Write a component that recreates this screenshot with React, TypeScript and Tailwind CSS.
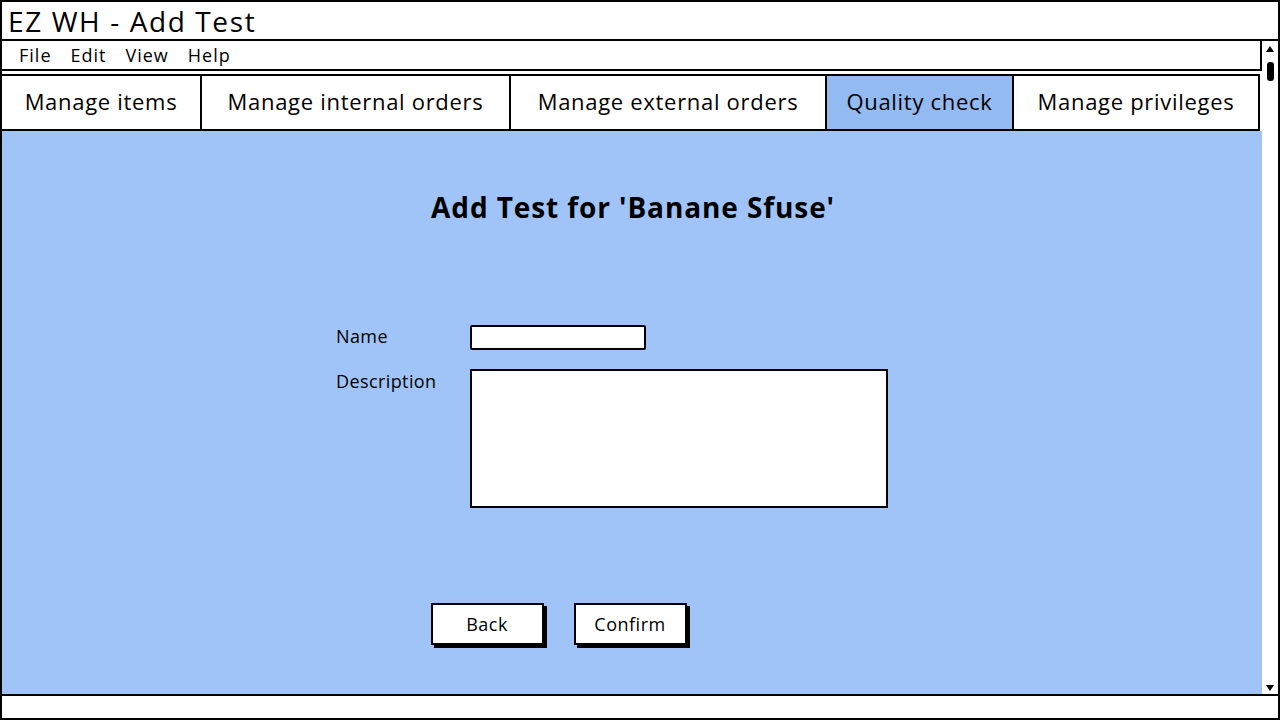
const tabs = [
  { label: "Manage items", w: "w-[198px]" },
  { label: "Manage internal orders", w: "w-[309px]" },
  { label: "Manage external orders", w: "w-[316px]" },
  { label: "Quality check", w: "w-[187px]", active: true },
  { label: "Manage privileges", w: "flex-1" },
]

export default function App() {
  return (
    <div className="w-[1280px] h-[720px] bg-white flex flex-col text-black overflow-hidden [font-family:'Open_Sans',Lato,sans-serif]">
      {/* Title bar */}
      <div className="h-[41px] border-2 border-black px-[6px] flex items-center text-[28px] tracking-[1.6px] leading-none shrink-0">
        EZ WH - Add Test
      </div>

      {/* Middle */}
      <div className="flex flex-1 min-h-0 border-l-2 border-r-2 border-black">
        <div className="flex-1 flex flex-col min-w-0">
          {/* Menu bar */}
          <div className="h-[30px] border-2 border-t-0 border-l-0 border-black flex items-center gap-[19px] pl-[17px] text-[18px] tracking-[1px] shrink-0">
            <span>File</span>
            <span>Edit</span>
            <span>View</span>
            <span>Help</span>
          </div>

          <div className="h-[3px] shrink-0" />

          {/* Tabs */}
          <div className="h-[57px] flex border-t-2 border-b-2 border-black mr-[2px] shrink-0">
            {tabs.map((t, i) => (
              <div
                key={t.label}
                className={`${t.w} flex items-center justify-center pb-[3px] text-[22px] tracking-[0.7px] ${i > 0 ? "border-l-2 border-black" : ""} ${i === tabs.length - 1 ? "border-r-2" : ""} ${t.active ? "bg-[#93baf1]" : "bg-white"}`}
              >
                {t.label}
              </div>
            ))}
          </div>

          {/* Content */}
          <div className="flex-1 bg-[#a0c4f7] border-b-2 border-black flex flex-col items-center">
            <h1 className="mt-[62px] text-[28px] font-bold leading-none ml-[2px] tracking-[0.9px]">
              Add Test for 'Banane Sfuse'
            </h1>

            <div className="mt-[104px] ml-[-40px] grid grid-cols-[134px_auto] gap-y-[19px] text-[18px] tracking-[0.4px]">
              <div className="-mt-[2px]">Name</div>
              <div className="w-[176px] h-[25px] bg-white border-2 border-black rounded-[2px]" />
              <div className="-mt-[1px]">Description</div>
              <div className="w-[418px] h-[139px] bg-white border-2 border-black" />
            </div>

            <div className="mt-[95px] flex gap-[30px] ml-[-147px] text-[18px] tracking-[0.5px]">
              <button className="w-[113px] h-[42px] bg-white border-2 border-black shadow-[3px_3px_0_#000]">
                Back
              </button>
              <button className="w-[113px] h-[42px] bg-white border-2 border-black shadow-[3px_3px_0_#000]">
                Confirm
              </button>
            </div>
          </div>
        </div>

        {/* Scrollbar */}
        <div className="w-[16px] flex flex-col items-center bg-white shrink-0 border-b-2 border-black">
          <svg width="10" height="8" viewBox="0 0 10 8" className="mt-[4px]">
            <polygon points="5,1 9,7 1,7" fill="#000" />
          </svg>
          <div className="mt-[9px] w-[7px] h-[19px] bg-black rounded-[3px]" />
          <div className="flex-1" />
          <svg width="10" height="8" viewBox="0 0 10 8" className="mb-[2px]">
            <polygon points="1,1 9,1 5,7" fill="#000" />
          </svg>
        </div>
      </div>

      {/* Status bar */}
      <div className="h-[24px] border-2 border-t-0 border-black shrink-0" />
    </div>
  )
}
